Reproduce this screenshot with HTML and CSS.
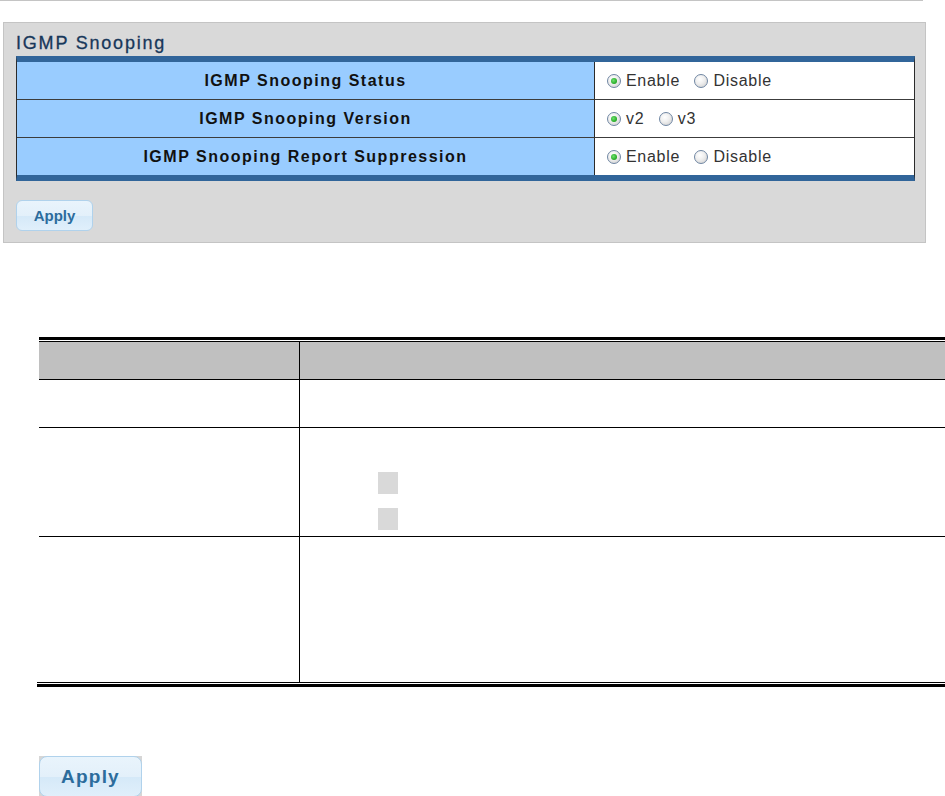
FILE: index.html
```html
<!DOCTYPE html>
<html lang="en">
<head>
    <meta charset="UTF-8">
    <meta name="viewport" content="width=device-width, initial-scale=1.0">
    <title>IGMP Snooping</title>
    <link rel="stylesheet" href="styles.css">
</head>
<body>

    <div class="top-line"></div>

    <!-- Screenshot panel -->
    <div class="panel">
        <h2 class="panel-title">IGMP Snooping</h2>

        <table class="config">
            <tr>
                <td class="label">IGMP Snooping Status</td>
                <td class="value">
                    <label class="opt"><input type="radio" name="status" checked>Enable</label>
                    <label class="opt"><input type="radio" name="status">Disable</label>
                </td>
            </tr>
            <tr>
                <td class="label">IGMP Snooping Version</td>
                <td class="value">
                    <label class="opt"><input type="radio" name="version" checked>v2</label>
                    <label class="opt"><input type="radio" name="version">v3</label>
                </td>
            </tr>
            <tr>
                <td class="label">IGMP Snooping Report Suppression</td>
                <td class="value">
                    <label class="opt"><input type="radio" name="suppress" checked>Enable</label>
                    <label class="opt"><input type="radio" name="suppress">Disable</label>
                </td>
            </tr>
        </table>

        <button class="apply">Apply</button>
    </div>

    <!-- Description table -->
    <div class="doc">
        <div class="rule-top"></div>
        <table class="desc">
            <tr class="head">
                <td class="col-obj"></td>
                <td class="col-desc"></td>
            </tr>
            <tr class="row-1">
                <td class="col-obj"></td>
                <td class="col-desc"></td>
            </tr>
            <tr class="row-2">
                <td class="col-obj"></td>
                <td class="col-desc">
                    <div class="bullets">
                        <span class="bullet"></span>
                        <span class="bullet"></span>
                    </div>
                </td>
            </tr>
            <tr class="row-3">
                <td class="col-obj"></td>
                <td class="col-desc"></td>
            </tr>
        </table>
        <div class="rule-bottom"></div>
    </div>

    <div class="apply-wrap">
        <button class="apply apply-big">Apply</button>
    </div>

</body>
</html>
```

FILE: styles.css
```css
html {
    overflow: hidden;
}

body {
    font-family: 'Liberation Sans', Arial, sans-serif;
    margin: 0;
    background-color: #fff;
    color: #333;
}

.top-line {
    width: 923px;
    height: 1px;
    background-color: #c4c4c4;
}

/* ---------- panel ---------- */

.panel {
    box-sizing: border-box;
    width: 923px;
    margin: 21px 0 0 3px;
    padding: 10px 9px 11px 12px;
    background-color: #d9d9d9;
    border: 1px solid #c4c4c4;
}

.panel-title {
    margin: 0 0 3px;
    font-size: 18px;
    font-weight: normal;
    line-height: 20px;
    letter-spacing: 1.8px;
    color: #17375a;
    -webkit-text-stroke: 0.3px #17375a;
}

.config {
    width: 899px;
    border-spacing: 0;
    border-top: 6px solid #31659a;
    border-bottom: 6px solid #31659a;
    border-left: 1px solid #2b2b2b;
    border-right: 1px solid #2b2b2b;
}

.config td {
    padding: 0;
    height: 37px;
    border-bottom: 1px solid #3c3c3c;
}

.config tr:last-child td {
    border-bottom: none;
}

.config .label {
    width: 577px;
    background-color: #99ccff;
    border-right: 1px solid #2b2b2b;
    text-align: center;
    font-size: 16px;
    font-weight: bold;
    letter-spacing: 1.5px;
    color: #111;
}

.config .value {
    background-color: #fff;
    height: 35px;
    padding: 2px 0 0 12px;
}

.opt {
    display: inline-flex;
    align-items: center;
    margin-right: 10px;
    font-size: 16px;
    letter-spacing: 0.7px;
    color: #333;
}

.opt input {
    appearance: none;
    -webkit-appearance: none;
    box-sizing: border-box;
    width: 14px;
    height: 14px;
    margin: 0 5px 0 0;
    border: 1px solid #6f86a3;
    border-radius: 50%;
    background: radial-gradient(circle at 40% 35%, #ffffff 0%, #eeeeee 45%, #c9c9c9 100%);
    position: relative;
}

.opt input:checked::after {
    content: "";
    position: absolute;
    left: 3px;
    top: 3px;
    width: 6px;
    height: 6px;
    border-radius: 50%;
    background: radial-gradient(circle at 40% 40%, #6ee06e 0%, #22a822 70%, #1b7d1b 100%);
}

/* ---------- buttons ---------- */

.apply {
    display: block;
    box-sizing: border-box;
    width: 77px;
    height: 31px;
    margin-top: 19px;
    padding: 0;
    border: 1px solid #b0d2ec;
    border-radius: 6px;
    background: linear-gradient(#e9f4fc 0%, #e3f0fa 50%, #d5e9f8 52%, #e0effb 100%);
    font-family: 'Liberation Sans', Arial, sans-serif;
    font-size: 15px;
    font-weight: bold;
    color: #2c6c9c;
    cursor: pointer;
}

.apply-wrap {
    display: inline-block;
    margin: 69px 0 0 39px;
    background-color: #d6d6d6;
}

.apply-big {
    width: 103px;
    height: 41px;
    margin: 0;
    border-radius: 8px;
    font-size: 19px;
    letter-spacing: 1.2px;
}

/* ---------- description table ---------- */

.doc {
    margin-top: 94px;
}

.rule-top {
    margin-left: 39px;
    height: 1px;
    border-top: 3px solid #000;
    border-bottom: 1px solid #000;
}

.desc {
    margin-left: 39px;
    width: 906px;
    border-spacing: 0;
}

.desc td {
    padding: 0;
    vertical-align: top;
    border-bottom: 1px solid #000;
}

.desc tr:last-child td {
    border-bottom: none;
}

.desc .col-obj {
    width: 260px;
    border-right: 1px solid #000;
}

.desc .head td {
    height: 37px;
    background-color: #c0c0c0;
}

.desc .row-1 td {
    height: 47px;
}

.desc .row-2 td {
    height: 108px;
}

.desc .row-3 td {
    height: 145px;
}

.bullets {
    display: flex;
    flex-direction: column;
    gap: 14px;
    padding: 44px 0 0 78px;
}

.bullet {
    width: 20px;
    height: 22px;
    background-color: #d9d9d9;
}

.rule-bottom {
    margin-left: 37px;
    height: 1px;
    border-top: 1px solid #000;
    border-bottom: 3px solid #000;
}
```
